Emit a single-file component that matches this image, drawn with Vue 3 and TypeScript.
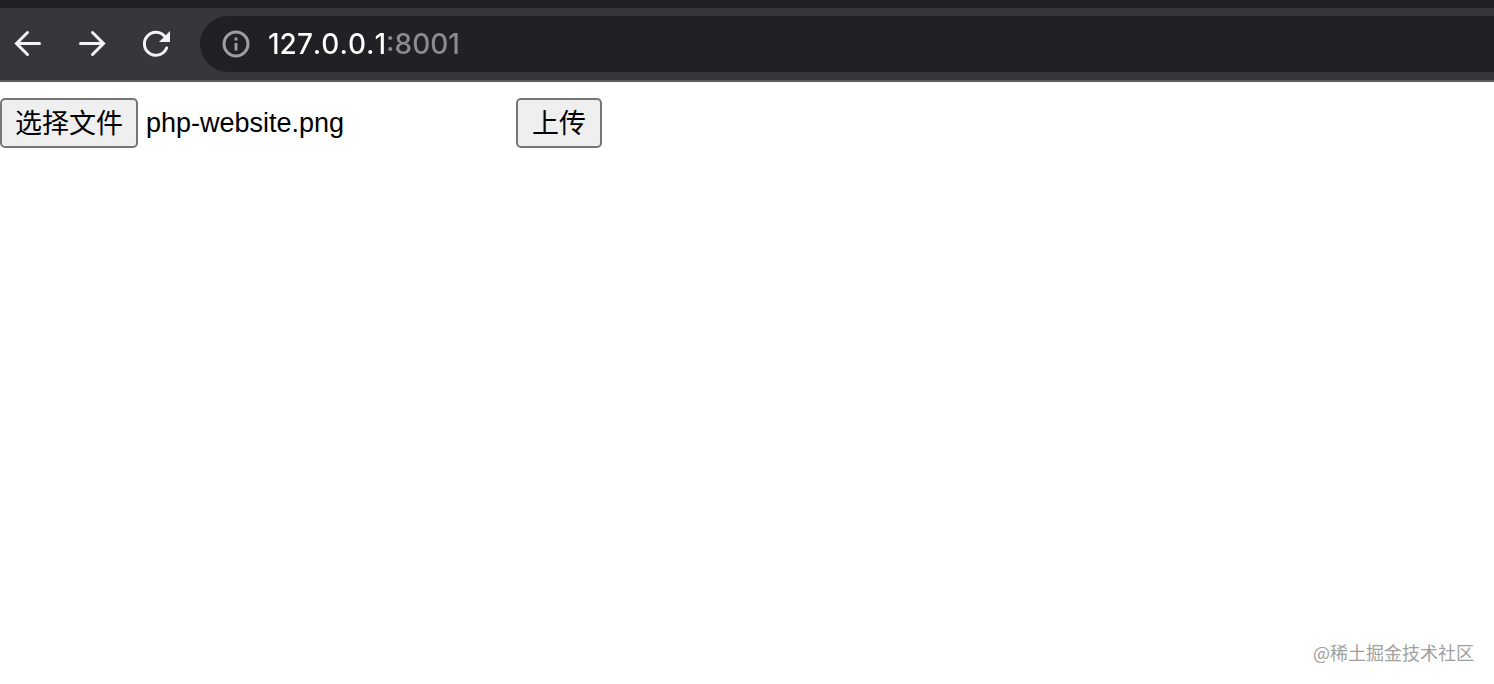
<script setup lang="ts">
import { ref } from 'vue'

const address = ref('127.0.0.1:8001')
const fileName = ref('php-website.png')

function onFileChange(event: Event): void {
  const file = (event.target as HTMLInputElement).files?.[0]
  if (file) fileName.value = file.name
}
</script>

<template>
  <div class="browser">
    <header class="toolbar">
      <nav class="nav">
        <button type="button" class="nav-button" aria-label="后退">
          <svg viewBox="0 0 40 40" aria-hidden="true">
            <path d="M31.500 19.500H9M19.500 8.500L8.500 19.500L19.500 30.500" />
          </svg>
        </button>
        <button type="button" class="nav-button" aria-label="前进">
          <svg viewBox="0 0 40 40" aria-hidden="true">
            <path d="M8.500 19.500H31M20.500 8.500L31.500 19.500L20.500 30.500" />
          </svg>
        </button>
        <button type="button" class="nav-button" aria-label="重新加载">
          <svg viewBox="0 0 40 40" aria-hidden="true">
            <path d="M30.600 24A11.500 11.500 0 1 1 28.600 12.300" />
            <path class="solid" d="M34 7V18H23Z" />
          </svg>
        </button>
      </nav>
      <div class="omnibox">
        <svg class="info" viewBox="0 0 28 28" aria-hidden="true">
          <circle cx="14" cy="14" r="12" />
          <path d="M14 13V20.500M14 7.500V10.500" />
        </svg>
        <input v-model="address" class="address" type="text" aria-label="地址" spellcheck="false" />
      </div>
    </header>

    <main class="page">
      <form class="upload" @submit.prevent>
        <div class="picker">
          <input id="file" class="file-input" type="file" @change="onFileChange" />
          <label for="file" class="control">选择文件</label>
          <span class="file-name">{{ fileName }}</span>
        </div>
        <button type="submit" class="control submit">上传</button>
      </form>
      <footer class="credit">@稀土掘金技术社区</footer>
    </main>
  </div>
</template>

<style>
body {
  margin: 0;
  background: #fff;
}
</style>

<style scoped>
.browser {
  display: flex;
  flex-direction: column;
  min-height: 100vh;
  font-family: "Liberation Sans", "Noto Sans CJK SC", sans-serif;
}

.toolbar {
  display: flex;
  align-items: center;
  padding: 8px 0;
  border-top: 8px solid #202124;
  border-bottom: 2px solid #5f5c5e;
  background: #36373b;
}

.nav {
  display: flex;
  gap: 24px;
  padding: 0 24px 0 8px;
}

.nav-button {
  width: 40px;
  height: 40px;
  padding: 0;
  border: 0;
  background: none;
}

.nav-button svg {
  display: block;
  fill: none;
  stroke: #f1f3f7;
  stroke-width: 3;
  stroke-linecap: round;
}

.nav-button .solid {
  fill: #f1f3f7;
  stroke: none;
}

.omnibox {
  display: flex;
  flex: 1;
  align-items: center;
  gap: 18px;
  height: 56px;
  padding-left: 22px;
  border-radius: 28px 0 0 28px;
  background: #202124;
}

.info {
  flex: none;
  width: 28px;
  height: 28px;
  fill: none;
  stroke: #9b9da1;
  stroke-width: 3;
}

.address {
  flex: 1;
  min-width: 0;
  padding: 0;
  border: 0;
  outline: 0;
  background: linear-gradient(to right, #fff 119px, #8b8c8f 119px);
  background-clip: text;
  color: transparent;
  caret-color: #fff;
  font: 500 28px/40px Inter, sans-serif;
  font-kerning: none;
}

.page {
  display: flex;
  flex: 1;
  flex-direction: column;
  justify-content: space-between;
}

.upload {
  display: flex;
  padding-top: 16px;
}

.picker {
  display: flex;
  align-items: center;
  width: 516px;
}

.file-input {
  position: absolute;
  width: 1px;
  height: 1px;
  overflow: hidden;
  clip-path: inset(50%);
}

.control {
  box-sizing: border-box;
  height: 50px;
  padding: 0 13px;
  border: 2px solid #767676;
  border-radius: 5px;
  background: #efefef;
  color: #000;
  font: 27px/44px "Noto Sans CJK SC", sans-serif;
  white-space: nowrap;
}

.submit {
  padding: 0 14px 2px;
}

.file-name {
  margin-left: 8px;
  font-size: 27px;
}

.credit {
  padding: 0 20px 20px;
  color: #a0a0a0;
  font: 18px/24px "Noto Sans CJK SC", sans-serif;
  text-align: right;
}
</style>
